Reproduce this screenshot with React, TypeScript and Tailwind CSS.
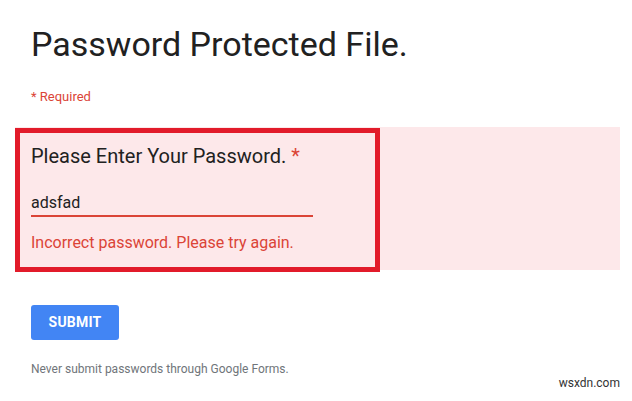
import React from 'react';

const font = { fontFamily: 'Roboto, "Liberation Sans", Arial, sans-serif' };

export default function App() {
    return (
        <div className="w-[632px] h-[401px] bg-white overflow-hidden relative" style={font}>
            <div className="pl-[31px] pt-[24px]">
                {/* Title */}
                <h1 className="text-[34px] leading-[40px] text-[#212121]">Password Protected File.</h1>
                <p className="mt-[25px] text-[13px] leading-[16px] text-[#db4437]">* Required</p>
            </div>

            {/* Question card */}
            <div className="relative mt-[22px] ml-[15px] w-[605px] h-[143px] bg-[#fde8ea]">
                <div className="px-[16px] pt-[17px]">
                    <div className="text-[20px] leading-[24px] text-[#212121]">
                        Please Enter Your Password. <span className="text-[#db4437]">*</span>
                    </div>
                    <div className="mt-[25px] w-[282px] border-b-2 border-[#db4437] pb-[2px] text-[16px] leading-[20px] text-[#212121]">
                        adsfad
                    </div>
                    <div className="mt-[16px] text-[16px] leading-[20px] text-[#db4437]">
                        Incorrect password. Please try again.
                    </div>
                </div>
                {/* annotation box */}
                <div className="absolute left-0 top-[1px] w-[365px] h-[144px] border-[5px] border-[#e21b2a] pointer-events-none" />
            </div>

            <div className="pl-[31px]">
                <button className="mt-[35px] h-[35px] w-[88px] rounded-[3px] bg-[#4285f4] text-white text-[14px] font-bold tracking-[0.2px]">
                    SUBMIT
                </button>
                <p className="mt-[21px] text-[12px] leading-[16px] text-[#70757a]">Never submit passwords through Google Forms.</p>
            </div>

            <div className="absolute right-[12px] bottom-[9px] text-[12px] text-[#333]">wsxdn.com</div>
        </div>
    );
}
